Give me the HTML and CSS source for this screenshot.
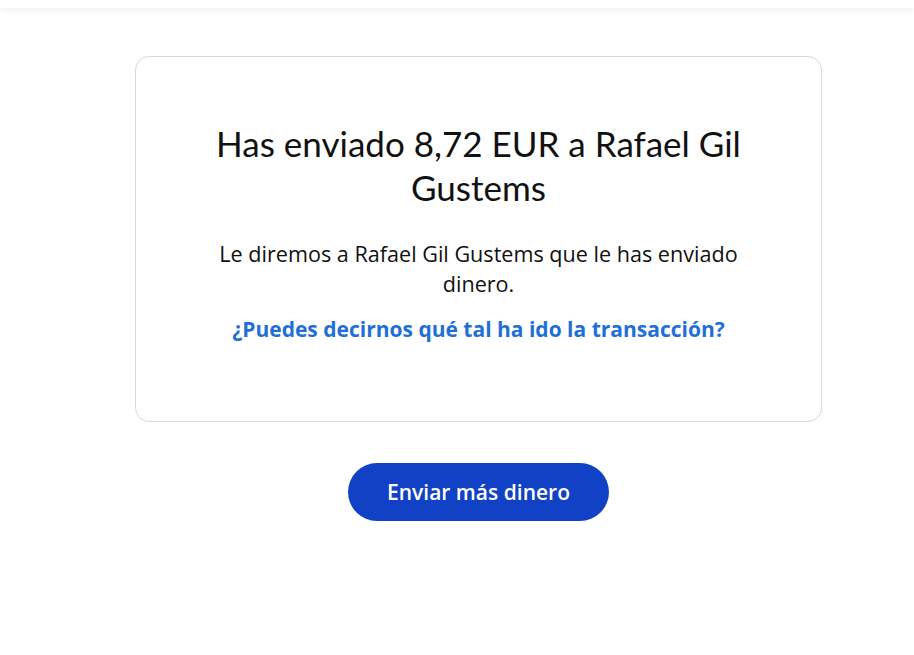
FILE: index.html
```html
<!DOCTYPE html>
<html lang="es">

<head>
    <meta charset="UTF-8">
    <meta name="viewport" content="width=device-width, initial-scale=1.0">
    <link rel="stylesheet" href="styles.css">
    <title>Enviado</title>
</head>

<body>

    <header class="top-bar"></header>

    <main class="page">
        <div class="column">
            <section class="confirm-card">
                <h1>Has enviado 8,72 EUR a Rafael Gil Gustems</h1>
                <p class="note">Le diremos a Rafael Gil Gustems que le has enviado dinero.</p>
                <a class="feedback" href="#">¿Puedes decirnos qué tal ha ido la transacción?</a>
            </section>
            <button class="send-more">Enviar más dinero</button>
        </div>
    </main>

</body>

</html>
```

FILE: styles.css
```css
body {
    font-family: 'Open Sans', 'Lato', sans-serif;
    background-color: #fff;
    color: #111;
    margin: 0;
}

.top-bar {
    height: 8px;
    background-color: #fff;
    box-shadow: 0 2px 6px rgba(0, 0, 0, 0.07);
}

.page {
    padding: 48px 0 0 135px;
}

.column {
    width: 687px;
    display: flex;
    flex-direction: column;
    align-items: center;
}

.confirm-card {
    width: 100%;
    box-sizing: border-box;
    border: 1px solid #d9d9d9;
    border-radius: 14px;
    padding: 64px 62px 77px;
    text-align: center;
}

h1 {
    font-family: 'Lato', sans-serif;
    font-size: 35px;
    line-height: 44px;
    font-weight: 400;
    margin: 0;
    color: #111;
}

.note {
    font-size: 21.6px;
    line-height: 30px;
    margin: 30px 0 15px;
}

.feedback {
    display: block;
    font-size: 21px;
    line-height: 30px;
    font-weight: bold;
    color: #1f70d6;
    text-decoration: none;
}

.send-more {
    margin-top: 41px;
    width: 261px;
    height: 58px;
    border: none;
    border-radius: 29px;
    background-color: #1141c4;
    color: #fff;
    font-family: inherit;
    font-size: 21px;
    font-weight: 600;
    cursor: pointer;
}
```
